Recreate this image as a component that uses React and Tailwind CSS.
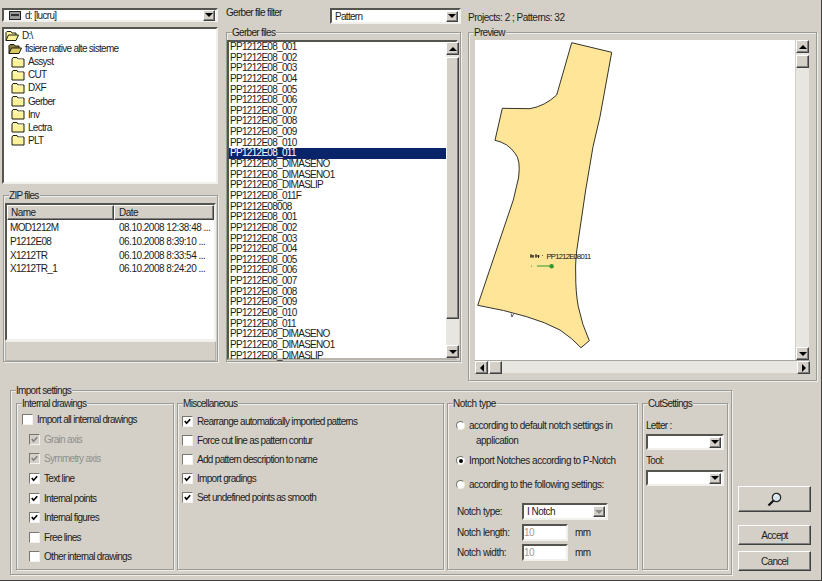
import React from "react";

const SUNKEN = "border-2 border-t-[#55554f] border-l-[#55554f] border-b-[#f2f0ec] border-r-[#f2f0ec] bg-white";
const RAISED = "bg-[#d4d0c8] border border-t-white border-l-white border-b-[#404040] border-r-[#404040] shadow-[inset_-1px_-1px_0_#808080]";

const treeFolders = ["Assyst", "CUT", "DXF", "Gerber", "Inv", "Lectra", "PLT"];
const zipFiles = [
  ["MOD1212M", "08.10.2008 12:38:48 ..."],
  ["P1212E08", "06.10.2008 8:39:10 ..."],
  ["X1212TR", "06.10.2008 8:33:54 ..."],
  ["X1212TR_1", "06.10.2008 8:24:20 ..."],
];
const numbered = ["001", "002", "003", "004", "005", "006", "007", "008", "009", "010", "011"].map((n) => "PP1212E08_" + n);
const extras = ["PP1212E08_DIMASENO", "PP1212E08_DIMASENO1", "PP1212E08_DIMASLIP"];
const gerberFiles = [...numbered, ...extras, "PP1212E08_011F", "PP1212E08008", ...numbered, ...extras];

function Arrow({ dir = "down", color = "#000" }) {
  const points = {
    up: "0,5 8,5 4,1",
    down: "0,1 8,1 4,5",
    left: "5,0 5,8 1,4",
    right: "1,0 1,8 5,4",
  };
  const vertical = dir === "up" || dir === "down";
  return (
    <svg width={vertical ? 8 : 6} height={vertical ? 6 : 8} viewBox={vertical ? "0 0 8 6" : "0 0 6 8"}>
      <polygon points={points[dir]} fill={color} />
    </svg>
  );
}

function GroupBox({ title, className, children }) {
  return (
    <div className={"relative shrink-0 border border-[#9b9b96] shadow-[inset_1px_1px_0_#f0eeea,1px_1px_0_#f0eeea] " + className}>
      <span className="absolute -top-[5px] left-[5px] h-[9px] bg-[#d4d0c8] pr-px leading-[9px] whitespace-nowrap">{title}</span>
      {children}
    </div>
  );
}

function Combo({ className, children, disabled }) {
  return (
    <div className={"flex items-center shrink-0 " + SUNKEN + " " + className}>
      <div className="flex-1 flex items-center min-w-0 pl-[2px] whitespace-nowrap">{children}</div>
      <div className={"w-[12px] h-[11px] mr-px flex items-center justify-center " + RAISED}>
        <Arrow dir="down" color={disabled ? "#8a8a86" : "#000"} />
      </div>
    </div>
  );
}

function ScrollBtn({ dir }) {
  return (
    <div className={"w-[13px] h-[13px] shrink-0 flex items-center justify-center " + RAISED}>
      <Arrow dir={dir} />
    </div>
  );
}

function FolderClosed() {
  return (
    <svg width="14" height="12" viewBox="0 0 14 12" className="shrink-0">
      <path d="M1 3 L2 1.5 H6 L7 3 H13 V11 H1 Z" fill="#fdf29a" stroke="#1c1c10" strokeWidth="1" />
      <path d="M2 4 H12" stroke="#fffbd0" strokeWidth="1" />
    </svg>
  );
}

function FolderOpen({ dark }) {
  return (
    <svg width="14" height="12" viewBox="0 0 14 12" className="shrink-0">
      <path d="M1 10.5 V2.5 L2 1.5 H6 L7 3 H11 V5" fill={dark ? "#8a7f40" : "#fdf29a"} stroke="#1c1c10" strokeWidth="1" />
      <path d="M1 10.5 L3.5 5 H13.5 L11 10.5 Z" fill={dark ? "#d8c860" : "#fdf29a"} stroke="#1c1c10" strokeWidth="1" />
    </svg>
  );
}

function DriveIcon() {
  return (
    <svg width="12" height="9" viewBox="0 0 12 9" className="shrink-0">
      <rect x="0.5" y="0.5" width="11" height="8" fill="#9a9a96" stroke="#222" />
      <rect x="2" y="3" width="8" height="2" fill="#333" />
    </svg>
  );
}

function TreeRow({ indent, icon, label }) {
  return (
    <div className={"flex items-center h-[13.1px] gap-[3px] whitespace-nowrap " + indent}>
      {icon}
      <span>{label}</span>
    </div>
  );
}

function Check({ checked, disabled, label, className }) {
  return (
    <div className={"flex items-center whitespace-nowrap gap-[4px] " + className}>
      <div className={"w-[11px] h-[11px] shrink-0 border border-t-[#77776f] border-l-[#77776f] border-b-[#f4f2ee] border-r-[#f4f2ee] " + (disabled ? "bg-[#d4d0c8]" : "bg-white")}>
        {checked && (
          <svg width="9" height="9" viewBox="0 0 10 10">
            <path d="M2 4.5 L4 7 L8 2.5" fill="none" stroke={disabled ? "#808080" : "#000"} strokeWidth="1.8" />
          </svg>
        )}
      </div>
      <span className={disabled ? "text-[#8f8f8b]" : ""}>{label}</span>
    </div>
  );
}

function Radio({ selected, label }) {
  return (
    <div className="flex items-center gap-[4px] whitespace-nowrap">
      <div className="w-[9px] h-[9px] shrink-0 rounded-full bg-white border border-t-[#77776f] border-l-[#77776f] border-b-[#eeeeea] border-r-[#eeeeea] flex items-center justify-center">
        {selected && <div className="w-[4px] h-[4px] rounded-full bg-black" />}
      </div>
      <span>{label}</span>
    </div>
  );
}

function NumberField({ label }) {
  return (
    <div className="flex items-center h-[19.5px] whitespace-nowrap">
      <span className="w-[74px] pl-[9px]">{label}</span>
      <div className={"w-[46px] h-[17px] leading-[13px] text-[#9a9a96] " + SUNKEN}>10</div>
      <span className="ml-[7px]">mm</span>
    </div>
  );
}

function PatternPreview() {
  return (
    <svg width="320" height="320" viewBox="475 40 320 320" className="block">
      <path
        d="M571.7 42.7 L611.7 52.3 L600 116.7 L593 146.7 L585.7 190 L578.3 240 Q575 260 575.7 273 Q575.5 292 578.3 306.7 Q582 325 589.3 340.7 L581 347.7 Q572 338 560 330 Q545 322 526.7 316.7 Q505 310 477.7 305.3 L513.3 200 L518.5 178 Q521 160 515 153.3 Q508 143 495 140.3 L502.3 108.3 L530 108.7 Q545 106 556.7 95 Z"
        fill="#fee597"
        stroke="#33332c"
        strokeWidth="1"
      />
      <path d="M511 313.5 L512 317 L513.5 314" fill="none" stroke="#33332c" strokeWidth="0.8" />
      <path d="M531 258 V254 M533 258 V255 M536 258 V254 M538.5 258 V255 M530 256 H534 M535 256 H539.5" stroke="#111" strokeWidth="0.9" fill="none" />
      <text x="546.5" y="258.5" fontSize="7.5" textLength="44" lengthAdjust="spacingAndGlyphs" fill="#111">PP1212E08011</text>
      <circle cx="542.5" cy="255.5" r="0.5" fill="#333" />
      <circle cx="531.5" cy="266" r="0.6" fill="#2c9a2c" />
      <path d="M537 266 H550" stroke="#2c9a2c" strokeWidth="1" />
      <circle cx="551.6" cy="266.2" r="2.2" fill="#2c9a2c" />
    </svg>
  );
}

function SearchIcon() {
  return (
    <svg width="15" height="15" viewBox="0 0 15 15">
      <circle cx="9.5" cy="5.5" r="4.2" fill="#d6e4ee" stroke="#222" strokeWidth="1.2" />
      <path d="M7 3.5 Q8.5 2.5 10 3" stroke="#fff" strokeWidth="1" fill="none" />
      <path d="M6.3 8.7 L1.5 13.5" stroke="#111" strokeWidth="2.2" />
    </svg>
  );
}

export default function App() {
  return (
    <div className="w-[822px] h-[581px] overflow-hidden flex flex-col bg-[#d4d0c8] border-r border-b border-r-[#404040] border-b-[#404040] text-[10px] tracking-[-0.7px] leading-[13px] text-[#1c1c1c] font-['Liberation_Sans',Arial,sans-serif]">
      <div className="flex h-[381px] shrink-0 pt-[8px] pl-[2px]">
        {/* disc, folders and zip files */}
        <div className="w-[216px] shrink-0 flex flex-col">
          <Combo className="h-[14px]">
            <span className="ml-[3px]"><DriveIcon /></span>
            <span className="ml-[4px]">d: [lucru]</span>
          </Combo>
          <div className={"mt-[5px] h-[157px] shrink-0 " + SUNKEN}>
            <TreeRow indent="pl-[1px]" icon={<FolderOpen />} label="D:\" />
            <TreeRow indent="pl-[4px]" icon={<FolderOpen dark />} label="fisiere native alte sisteme" />
            {treeFolders.map((name) => (
              <TreeRow key={name} indent="pl-[7px]" icon={<FolderClosed />} label={name} />
            ))}
          </div>
          <GroupBox title="ZIP files" className="mt-[11px] ml-px w-[215px] h-[167px] pt-[7px] px-px pb-px">
            <div className={"h-[138px] tracking-[-0.5px] " + SUNKEN}>
              <div className="flex h-[15px]">
                <div className={"w-[108px] pl-[3px] flex items-center " + RAISED}>Name</div>
                <div className={"w-[101px] pl-[4px] flex items-center " + RAISED}>Date</div>
              </div>
              <div className="pt-[1px]">
                {zipFiles.map(([name, date]) => (
                  <div key={name} className="flex h-[13.7px] items-center whitespace-nowrap">
                    <span className="w-[112px] shrink-0 pl-[3px] tracking-[-0.7px]">{name}</span>
                    <span>{date}</span>
                  </div>
                ))}
              </div>
            </div>
            <div className="h-[20px] border border-[#b5b2aa] border-t-[#f0eeea]" />
          </GroupBox>
        </div>

        {/* gerber list */}
        <div className="w-[235px] ml-[8px] shrink-0 flex flex-col">
          <div className="flex h-[16px] shrink-0 items-center">
            <span className="w-[104px] whitespace-nowrap -mt-[8px]">Gerber file filter</span>
            <Combo className="w-[131px] h-[16px]">
              <span className="ml-[1px]">Pattern</span>
            </Combo>
          </div>
          <GroupBox title="Gerber files" className="mt-[8px] w-[235px] h-[330px] pt-[7px] pr-[2px]">
            <div className={"h-[320px] flex !border-b-[#b8b5ae] " + SUNKEN}>
              <div className="w-[217px] shrink-0 leading-[10.6px]">
                {gerberFiles.map((name, i) => (
                  <div key={i} className={"h-[10.65px] pl-[1px] " + (i === 10 ? "bg-[#0a246a] text-white" : "")}>{name}</div>
                ))}
              </div>
              <div className="w-[13px] flex flex-col bg-[#e8e6e0]">
                <ScrollBtn dir="up" />
                <div className="flex-1 pt-[2px]">
                  <div className={"h-[262px] " + RAISED} />
                </div>
                <ScrollBtn dir="down" />
              </div>
            </div>
          </GroupBox>
        </div>

        {/* preview */}
        <div className="w-[349px] ml-[7px] shrink-0 flex flex-col">
          <div className="h-[16px] shrink-0 pt-[3px] whitespace-nowrap tracking-[-0.5px]">Projects: 2 ; Patterns: 32</div>
          <GroupBox title="Preview" className="mt-[8px] w-[349px] h-[349px] pt-[7px] pl-[6px]">
            <div className="flex">
              <div className="w-[321px] h-[320px] bg-white border-r border-[#d4d0c8]">
                <PatternPreview />
              </div>
              <div className="w-[13px] h-[320px] flex flex-col bg-[#e8e6e0]">
                <ScrollBtn dir="up" />
                <div className="flex-1 pt-[2px]">
                  <div className={"h-[13px] " + RAISED} />
                </div>
                <ScrollBtn dir="down" />
              </div>
            </div>
            <div className="w-[335px] h-[13px] flex bg-[#e8e6e0] border-t border-[#a8a8a2]">
              <ScrollBtn dir="left" />
              <div className="flex-1 pl-px">
                <div className={"w-[13px] h-[13px] " + RAISED} />
              </div>
              <ScrollBtn dir="right" />
            </div>
          </GroupBox>
        </div>
      </div>

      <div className="flex mt-[9px] ml-[10px]">
        <GroupBox title="Import settings" className="w-[722px] h-[185px] pt-[12px] pl-[5px] flex">
          <GroupBox title="Internal drawings" className="w-[158px] h-[167px] pl-[5px] pt-[6px]">
            <Check className="h-[19.6px]" label="Import all internal drawings" />
            <div className="pl-[7px]">
              <Check className="h-[19.6px]" checked disabled label="Grain axis" />
              <Check className="h-[19.6px]" checked disabled label="Symmetry axis" />
              <Check className="h-[19.6px]" checked label="Text line" />
              <Check className="h-[19.6px]" checked label="Internal points" />
              <Check className="h-[19.6px]" checked label="Internal figures" />
              <Check className="h-[19.6px]" label="Free lines" />
              <Check className="h-[19.6px]" label="Other internal drawings" />
            </div>
          </GroupBox>

          <GroupBox title="Miscellaneous" className="ml-[3px] w-[267px] h-[167px] pl-[4px] pt-[8px]">
            <Check className="h-[19px]" checked label="Rearrange automatically imported patterns" />
            <Check className="h-[19px]" label="Force cut line as pattern contur" />
            <Check className="h-[19px]" label="Add pattern description to name" />
            <Check className="h-[19px]" checked label="Import gradings" />
            <Check className="h-[19px]" checked label="Set undefined points as smooth" />
          </GroupBox>

          <GroupBox title="Notch type" className="ml-[3px] w-[191px] h-[167px] pl-[8px] pt-[15px] tracking-[-0.5px]">
            <Radio label="according to default notch settings in" />
            <div className="pl-[20px] mt-[2px] whitespace-nowrap">application</div>
            <div className="mt-[7px]"><Radio selected label="Import Notches according to P-Notch" /></div>
            <div className="mt-[11px]"><Radio label="according to the following settings:" /></div>
            <div className="flex items-center mt-[12px] -ml-[8px] h-[17px]">
              <span className="w-[74px] pl-[9px] whitespace-nowrap">Notch type:</span>
              <Combo className="w-[86px] h-[17px]" disabled>
                <span className="ml-[1px]">I Notch</span>
              </Combo>
            </div>
            <div className="-ml-[8px] mt-[3px]">
              <NumberField label="Notch length:" />
              <NumberField label="Notch width:" />
            </div>
          </GroupBox>

          <GroupBox title="CutSettings" className="ml-[4px] w-[86px] h-[167px] pl-[3px] pt-[15px]">
            <div>Letter :</div>
            <Combo className="mt-[2px] w-[78px] h-[16px]" />
            <div className="mt-[4px]">Tool:</div>
            <Combo className="mt-[3px] w-[78px] h-[16px]" />
          </GroupBox>
        </GroupBox>

        <div className="ml-[6px] w-[73px] flex flex-col pt-[96px]">
          <button className={"h-[26px] flex items-center justify-center " + RAISED}><SearchIcon /></button>
          <button className={"mt-[13px] h-[20px] " + RAISED}>Accept</button>
          <button className={"mt-[6px] h-[20px] " + RAISED}>Cancel</button>
        </div>
      </div>
    </div>
  );
}
